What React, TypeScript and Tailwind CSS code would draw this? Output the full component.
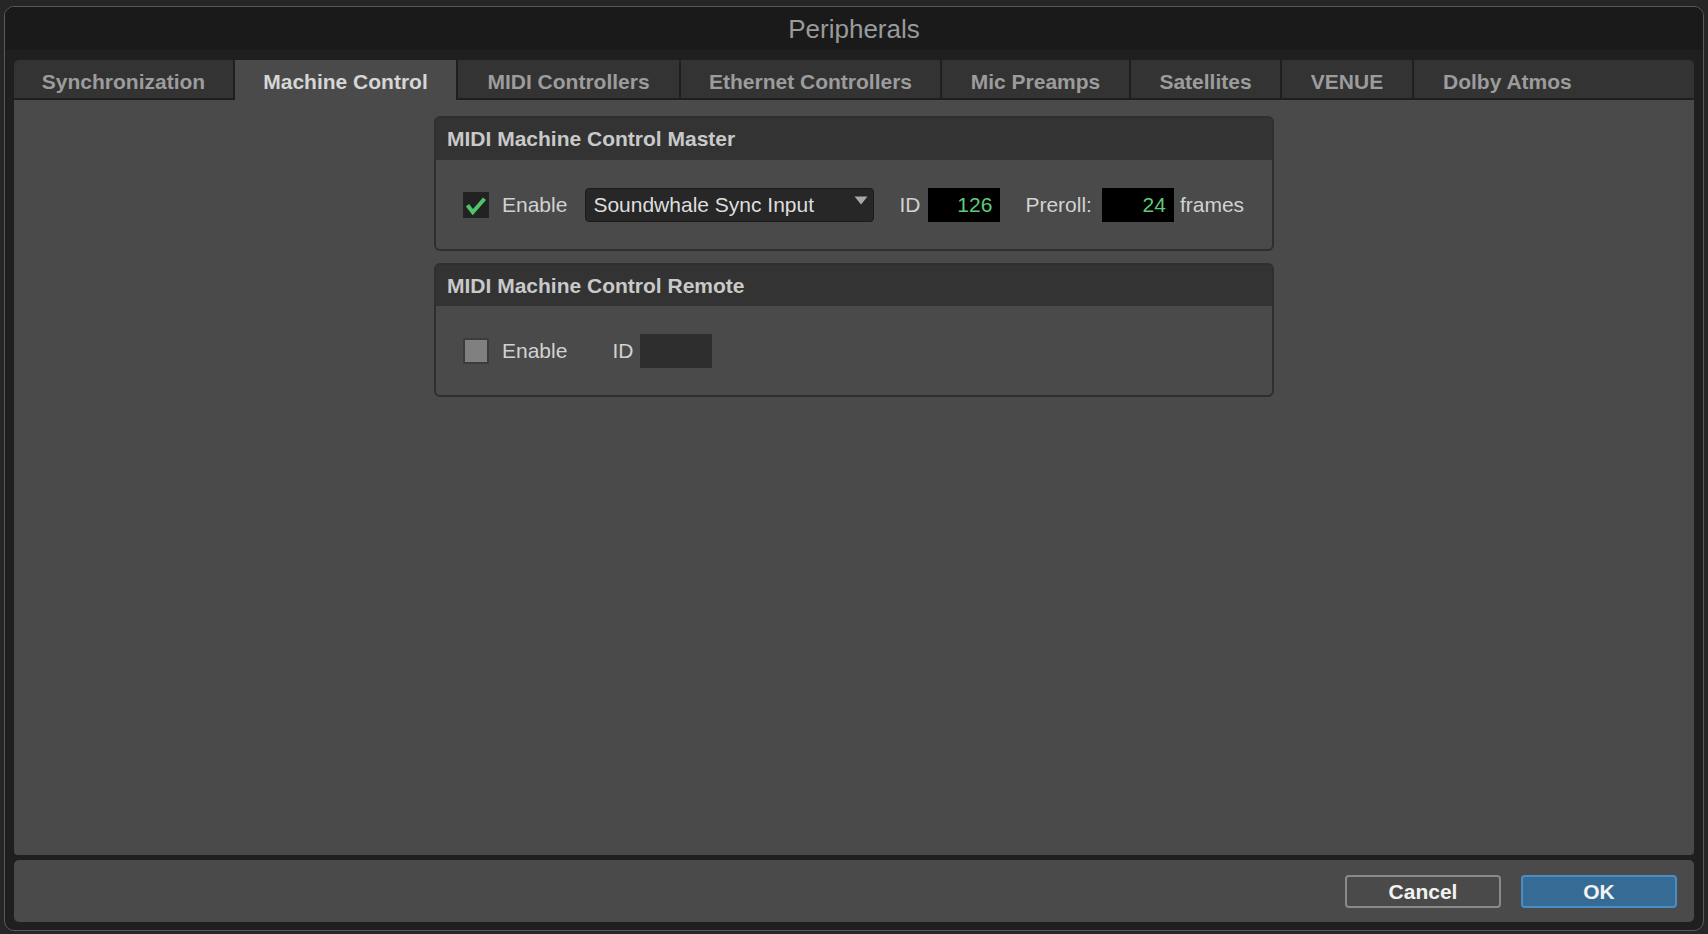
import React from "react";

const tabs: { label: string; w: string; active?: boolean }[] = [
  { label: "Synchronization", w: "w-[219px] rounded-tl-[5px]" },
  { label: "Machine Control", w: "w-[221px]", active: true },
  { label: "MIDI Controllers", w: "w-[221px]" },
  { label: "Ethernet Controllers", w: "w-[259px]" },
  { label: "Mic Preamps", w: "w-[187px]" },
  { label: "Satellites", w: "w-[149px]" },
  { label: "VENUE", w: "w-[130px]" },
];

function CheckedBox() {
  return (
    <div className="w-[26px] h-[26px] bg-[#222222] shrink-0 flex items-center justify-center">
      <svg width="26" height="26" viewBox="0 0 26 26">
        <path
          d="M4.5 13.2 L9.8 20.2 L21.5 6.8"
          fill="none"
          stroke="#4fc46b"
          strokeWidth="4"
          strokeLinecap="butt"
          strokeLinejoin="miter"
        />
      </svg>
    </div>
  );
}

function UncheckedBox() {
  return <div className="w-[26px] h-[26px] bg-[#808080] border-2 border-[#3c3c3c] shrink-0" />;
}

export default function App() {
  return (
    <div className="w-[1708px] h-[934px] bg-[#262626] pt-[6px] pl-[4px] font-['Liberation_Sans',Arial,sans-serif] overflow-hidden">
      <div className="w-[1700px] h-[925px] rounded-[10px] border border-[#5a5a5a] bg-[#1f1f1f] flex flex-col overflow-hidden">
        {/* Title bar */}
        <div className="h-[43px] bg-[#1a1a1a] pt-[9px] text-center text-[26px] leading-[26px] text-[#9a9a9a] shrink-0">
          Peripherals
        </div>
        <div className="flex-1 flex flex-col px-[9px] pt-[10px] pb-[8px]">
          {/* Tabs */}
          <div className="h-[40px] flex gap-[2px] shrink-0">
            {tabs.map((t) => (
              <div
                key={t.label}
                className={
                  t.active
                    ? `${t.w} h-full bg-[#4a4a4a] text-center text-[21px] font-bold text-[#d6d6d6] pt-[6px] leading-[32px]`
                    : `${t.w} h-full bg-[#333333] border-b-2 border-[#1f1f1f] text-center text-[21px] font-bold text-[#9c9c9c] pt-[6px] leading-[32px]`
                }
              >
                {t.label}
              </div>
            ))}
            <div className="flex-1 h-full bg-[#333333] border-b-2 border-[#1f1f1f] rounded-tr-[5px] pl-[29px] text-[21px] font-bold text-[#9c9c9c] pt-[6px] leading-[32px]">
              Dolby Atmos
            </div>
          </div>

          {/* Content */}
          <div className="flex-1 bg-[#4a4a4a] rounded-b-[4px] flex flex-col items-center pt-[16px] gap-[12px]">
            {/* Master panel */}
            <div className="w-[840px] border-2 border-[#2f2f2f] rounded-[6px] overflow-hidden">
              <div className="h-[42px] bg-[#333333] pl-[11px] text-[21px] font-bold leading-[42px] text-[#c9c9c9]">
                MIDI Machine Control Master
              </div>
              <div className="h-[89px] flex items-center pl-[27px] text-[21px] text-[#d2d2d2]">
                <CheckedBox />
                <span className="ml-[13px]">Enable</span>
                <div className="ml-[18px] w-[289px] h-[34px] bg-[#272727] border border-[#1b1b1b] rounded-[4px] flex items-start justify-between pl-[7px] pr-[5px]">
                  <span className="leading-[32px] text-[#dedede]">Soundwhale Sync Input</span>
                  <svg width="14" height="9" viewBox="0 0 14 9" className="mt-[7px]">
                    <path d="M0.5 0.5 L13.5 0.5 L7 8.5 Z" fill="#a9a9a9" />
                  </svg>
                </div>
                <span className="ml-[25px]">ID</span>
                <div className="ml-[8px] w-[72px] h-[34px] bg-black text-right pr-[8px] leading-[34px] text-[#5dcb79]">
                  126
                </div>
                <span className="ml-[25px]">Preroll:</span>
                <div className="ml-[10px] w-[72px] h-[34px] bg-black text-right pr-[8px] leading-[34px] text-[#5dcb79]">
                  24
                </div>
                <span className="ml-[6px]">frames</span>
              </div>
            </div>

            {/* Remote panel */}
            <div className="w-[840px] border-2 border-[#2f2f2f] rounded-[6px] overflow-hidden">
              <div className="h-[41px] bg-[#333333] pl-[11px] text-[21px] font-bold leading-[41px] text-[#c9c9c9]">
                MIDI Machine Control Remote
              </div>
              <div className="h-[89px] flex items-center pl-[27px] text-[21px] text-[#d2d2d2]">
                <UncheckedBox />
                <span className="ml-[13px]">Enable</span>
                <span className="ml-[45px]">ID</span>
                <div className="ml-[7px] w-[72px] h-[34px] bg-[#2e2e2e]" />
              </div>
            </div>
          </div>

          {/* Footer */}
          <div className="mt-[5px] h-[62px] bg-[#4a4a4a] rounded-[5px] flex items-center justify-end pr-[17px] gap-[20px] shrink-0">
            <button className="w-[156px] h-[33px] rounded-[4px] border-2 border-[#8a8a8a] text-[21px] font-bold text-[#f2f2f2] leading-none">
              Cancel
            </button>
            <button className="w-[156px] h-[33px] rounded-[4px] border-2 border-[#4a8dc6] bg-[#356b95] text-[21px] font-bold text-[#f2f2f2] leading-none">
              OK
            </button>
          </div>
        </div>
      </div>
    </div>
  );
}
